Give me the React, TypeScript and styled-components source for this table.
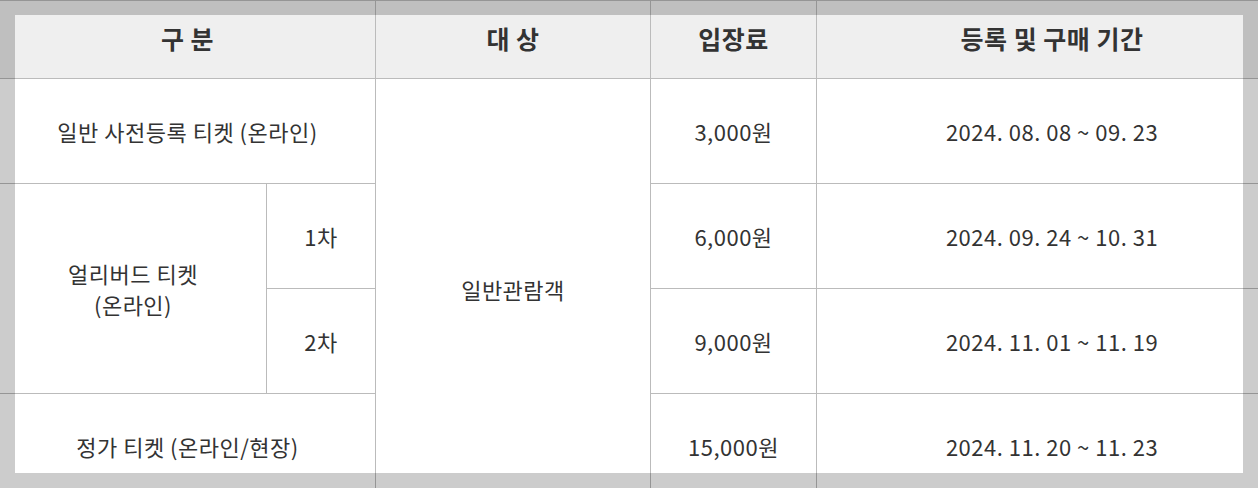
import React from "react";
import styled, { createGlobalStyle } from "styled-components";

const Global = createGlobalStyle`
  html, body {
    margin: 0;
    padding: 0;
    background: #ffffff;
    overflow: hidden;
  }
  body {
    font-family: "Noto Sans CJK KR", "Noto Sans", sans-serif;
    color: #333333;
  }
`;

const Page = styled.div`
  width: 1258px;
  height: 488px;
  overflow: hidden;
`;

const Table = styled.table`
  border-collapse: collapse;
  table-layout: fixed;
  width: 1288px;
  margin-left: -1px;
  margin-top: 0;
`;

const HeadCell = styled.th`
  height: 78px;
  padding: 0 0 4px;
  background: #efefef;
  border: 1px solid #bbbbbb;
  font-size: 25px;
  font-weight: 700;
  letter-spacing: 0.5px;
  color: #333333;
  text-align: center;
  vertical-align: middle;
  box-sizing: border-box;
`;

const Cell = styled.td`
  height: 105px;
  padding: 1px 0 0;
  border: 1px solid #bbbbbb;
  font-size: 22px;
  font-weight: 400;
  letter-spacing: 0.5px;
  line-height: 31px;
  color: #333333;
  text-align: center;
  vertical-align: middle;
  box-sizing: border-box;
`;

const Overlay = styled.div`
  position: fixed;
  inset: 0;
  border: 15px solid rgba(0, 0, 0, 0.2);
  box-sizing: border-box;
  pointer-events: none;
`;

const rows = [
  { price: "3,000원", period: "2024. 08. 08 ~ 09. 23" },
  { price: "6,000원", period: "2024. 09. 24 ~ 10. 31" },
  { price: "9,000원", period: "2024. 11. 01 ~ 11. 19" },
  { price: "15,000원", period: "2024. 11. 20 ~ 11. 23" },
];

export default function App() {
  return (
    <Page>
      <Global />
      <Table>
        <colgroup>
          <col style={{ width: 267 }} />
          <col style={{ width: 109 }} />
          <col style={{ width: 275 }} />
          <col style={{ width: 166 }} />
          <col style={{ width: 471 }} />
        </colgroup>
        <thead>
          <tr>
            <HeadCell colSpan={2}>구 분</HeadCell>
            <HeadCell>대 상</HeadCell>
            <HeadCell>입장료</HeadCell>
            <HeadCell>등록 및 구매 기간</HeadCell>
          </tr>
        </thead>
        <tbody>
          <tr>
            <Cell colSpan={2}>일반 사전등록 티켓 (온라인)</Cell>
            <Cell rowSpan={4}>일반관람객</Cell>
            <Cell>{rows[0].price}</Cell>
            <Cell>{rows[0].period}</Cell>
          </tr>
          <tr>
            <Cell rowSpan={2}>
              얼리버드 티켓
              <br />
              (온라인)
            </Cell>
            <Cell>1차</Cell>
            <Cell>{rows[1].price}</Cell>
            <Cell>{rows[1].period}</Cell>
          </tr>
          <tr>
            <Cell>2차</Cell>
            <Cell>{rows[2].price}</Cell>
            <Cell>{rows[2].period}</Cell>
          </tr>
          <tr>
            <Cell colSpan={2}>정가 티켓 (온라인/현장)</Cell>
            <Cell>{rows[3].price}</Cell>
            <Cell>{rows[3].period}</Cell>
          </tr>
        </tbody>
      </Table>
      <Overlay />
    </Page>
  );
}
